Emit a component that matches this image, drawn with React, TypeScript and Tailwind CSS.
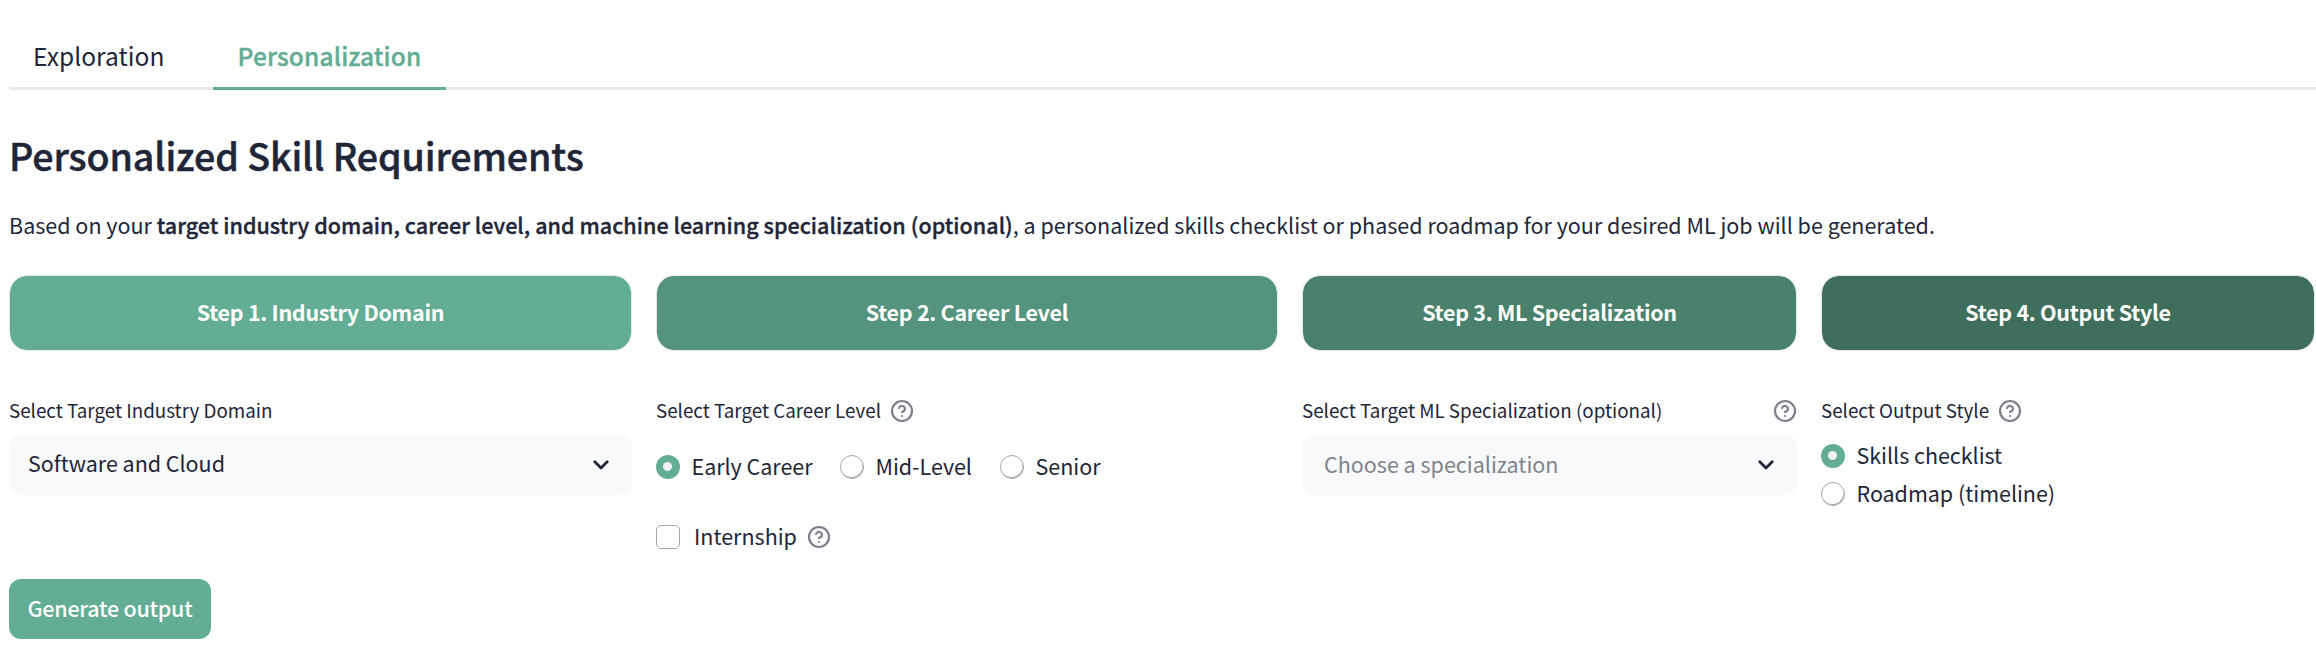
import type { ReactNode } from "react";

function HelpIcon() {
  return (
    <svg className="size-6 shrink-0 text-[#7d818c]" viewBox="0 0 24 24" fill="none" stroke="currentColor" strokeWidth="2.2" strokeLinecap="round" strokeLinejoin="round">
      <circle cx="12" cy="12" r="10" />
      <path d="M9.09 9a3 3 0 0 1 5.83 1c0 2-3 3-3 3" />
      <path d="M12 17h.01" />
    </svg>
  );
}

function Chevron() {
  return (
    <svg className="h-[10px] w-[16px] shrink-0" viewBox="0 0 16 10" fill="none" stroke="#1f2638" strokeWidth="2.8" strokeLinecap="round" strokeLinejoin="round">
      <path d="M1.8 1.8 8 8 14.2 1.8" />
    </svg>
  );
}

function Step({ color, children }: { color: string; children: ReactNode }) {
  return (
    <div className={`flex h-[76px] items-center justify-center rounded-[18px] border border-[#e5e7eb] bg-clip-padding pb-[3px] text-[21.5px] font-bold tracking-[-0.3px] text-white ${color}`}>
      {children}
    </div>
  );
}

function Label({ children, help, spread }: { children: ReactNode; help?: boolean; spread?: boolean }) {
  return (
    <div className={`flex h-6 items-center text-[18.8px] ${spread ? "justify-between" : "gap-[9px]"}`}>
      <span className="pb-0.5 whitespace-nowrap">{children}</span>
      {help && <HelpIcon />}
    </div>
  );
}

function Radio({ label, checked }: { label: string; checked?: boolean }) {
  return (
    <label className="flex h-6 items-center gap-[11.5px]">
      {checked ? (
        <span className="flex size-6 items-center justify-center rounded-full bg-[#62ad94]">
          <span className="mr-px mb-px size-[9px] rounded-full bg-[#f0f2f6]" />
        </span>
      ) : (
        <span className="size-6 rounded-full border border-[#a5a8af] shadow-[inset_-0.5px_-1px_0_#a5a8af]" />
      )}
      <span className="pb-0.5 tracking-[-0.03px] whitespace-nowrap">{label}</span>
    </label>
  );
}

export default function App() {
  return (
    <div className="flex h-[646px] flex-col bg-white pl-[9px] font-['Noto_Sans_CJK_JP','Noto_Sans',sans-serif] text-[21.5px] leading-6 text-[#1f2638]">
      <nav className="flex h-[90px] items-end text-[24.5px] shadow-[inset_0_-3px_0_#e8e9e9]">
        <div className="flex h-[66px] w-[204px] items-center pb-[3px] pl-6 tracking-[0.05px]">Exploration</div>
        <div className="flex h-[66px] w-[233px] items-center justify-center border-b-[3px] border-[#62ad94] font-medium tracking-[0.14px] text-[#62ad94] [-webkit-text-stroke:0.35px_#62ad94]">
          Personalization
        </div>
      </nav>

      <h1 className="mt-10 h-[50px] text-[37.6px] leading-[50px] font-medium tracking-[-0.1px] [-webkit-text-stroke:0.5px_#1f2638]">
        Personalized Skill Requirements
      </h1>

      <p className="mt-[31px] h-7 leading-7 whitespace-nowrap">
        Based on your{" "}
        <strong className="font-medium tracking-[0.04px] [-webkit-text-stroke:0.35px_#1f2638]">
          target industry domain, career level, and machine learning specialization (optional)
        </strong>
        , a personalized skills checklist or phased roadmap for your desired ML job will be generated.
      </p>

      <div className="mt-9 grid grid-cols-[623px_622px_495px_494px] gap-6">
        <Step color="bg-[#62ad94]">Step 1. Industry Domain</Step>
        <Step color="bg-[#54937d]">Step 2. Career Level</Step>
        <Step color="bg-[#49816c]">Step 3. ML Specialization</Step>
        <Step color="bg-[#3f6f5c]">Step 4. Output Style</Step>
      </div>

      <div className="mt-12 grid h-[180px] grid-cols-[623px_622px_495px_494px] gap-x-6">
        <section>
          <Label>Select Target Industry Domain</Label>
          <div className="mt-3 flex h-[60px] items-center justify-between rounded-xl bg-[#f8f9fb] pr-[23px] pl-[19px]">
            <span className="pb-1 tracking-[-0.03px]">Software and Cloud</span>
            <Chevron />
          </div>
        </section>

        <section>
          <Label help>Select Target Career Level</Label>
          <div className="mt-8 flex">
            <div className="w-[184px]"><Radio label="Early Career" checked /></div>
            <div className="w-[160px]"><Radio label="Mid-Level" /></div>
            <Radio label="Senior" />
          </div>
          <div className="mt-[46px] flex h-6 items-center">
            <span className="size-6 rounded-[5px] border border-[#a5a8af]" />
            <span className="ml-[14px] pb-0.5">Internship</span>
            <span className="ml-[10px]"><HelpIcon /></span>
          </div>
        </section>

        <section>
          <Label help spread>Select Target ML Specialization (optional)</Label>
          <div className="mt-3 flex h-[60px] items-center justify-between rounded-xl bg-[#f8f9fb] pr-[23px] pl-[22px]">
            <span className="pb-0.5 text-[#7f838d]">Choose a specialization</span>
            <Chevron />
          </div>
        </section>

        <section>
          <Label help>Select Output Style</Label>
          <div className="mt-[21px] flex flex-col gap-[14px]">
            <Radio label="Skills checklist" checked />
            <Radio label="Roadmap (timeline)" />
          </div>
        </section>
      </div>

      <button className="flex h-[60px] w-[202px] items-center justify-center rounded-xl bg-[#62ad94] pb-0.5 font-medium tracking-[-0.25px] text-white">
        Generate output
      </button>
    </div>
  );
}
